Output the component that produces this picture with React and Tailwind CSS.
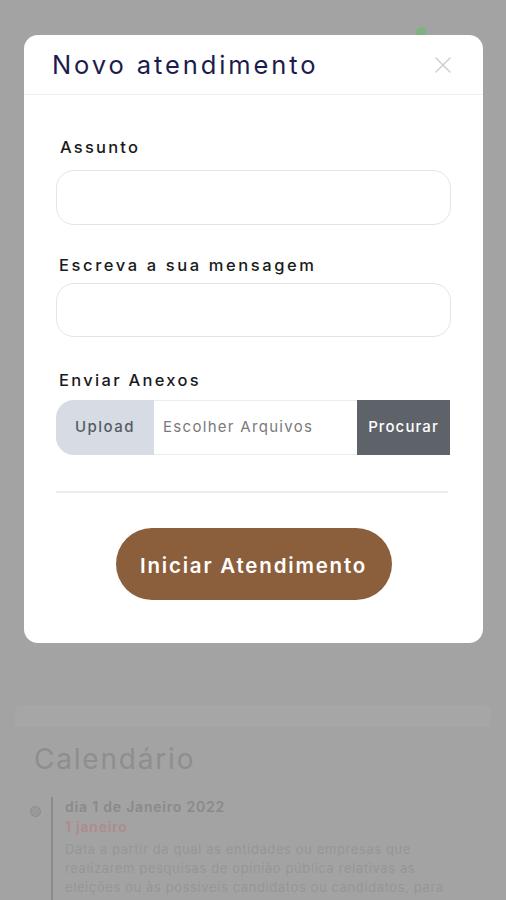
import React from 'react';

const font = { fontFamily: 'Inter, "Open Sans", sans-serif' };

const Background = () => (
  <div className="min-h-[900px] bg-[#a3a3a3] overflow-hidden">
    {/* faded status dot */}
    <div className="flex justify-end pr-[80px] pt-[27px]">
      <span className="block w-[10px] h-[10px] rounded-full bg-[#7fb27f]"></span>
    </div>

    {/* faded card edge */}
    <div className="mt-[668px] mx-[15px] h-[22px] bg-[#a6a6a6] rounded-t-md"></div>

    <div className="px-[34px] pt-[14px]">
      <h2 className="text-[28px] leading-[36px] text-[#8e8e8e] tracking-[1.8px]">Calendário</h2>

      <div className="mt-[20px] flex">
        <div className="w-[12px] pt-[9px] -ml-[4px]">
          <span className="block w-[11px] h-[11px] rounded-full border border-[#8c8c8c] bg-[#9a9a9a]"></span>
        </div>
        <div className="ml-[9px] w-[2px] bg-[#8a8a8a]"></div>
        <div className="pl-[12px] pb-[20px]">
          <p className="text-[14px] leading-[20px] font-semibold text-[#8a8a8a] tracking-[0.8px]">dia 1 de Janeiro 2022</p>
          <p className="text-[14px] leading-[20px] font-semibold text-[#b08a8e] tracking-[0.8px]">1 janeiro</p>
          <p className="mt-[3px] text-[13px] leading-[19px] text-[#969696] tracking-[0.6px] whitespace-nowrap">
            Data a partir da qual as entidades ou empresas que<br />
            realizarem pesquisas de opinião pública relativas as<br />
            eleições ou às possíveis candidatos ou candidatos, para
          </p>
        </div>
      </div>
    </div>
  </div>
);

const CloseIcon = () => (
  <svg width="18" height="18" viewBox="0 0 18 18" fill="none" stroke="#cfcfcf" strokeWidth="1.5" strokeLinecap="round">
    <path d="M2 2 L16 16 M16 2 L2 16" />
  </svg>
);

export default function App() {
  return (
    <div className="relative w-full" style={font}>
      <Background />

      {/* modal */}
      <div className="absolute left-[24px] top-[35px] w-[459px] bg-white rounded-[14px]">
        <div className="h-[60px] flex items-center justify-between pl-[28px] pr-[31px] border-b border-[#efefef]">
          <h1 className="text-[25.5px] leading-[32px] text-[#1c1c4c] tracking-[2.9px]">Novo atendimento</h1>
          <CloseIcon />
        </div>

        <div className="px-[32px] pt-[40px] pb-[43px]">
          <label className="block pl-[4px] text-[16.5px] leading-[24px] font-medium text-[#1a1a1a] tracking-[2.2px]">Assunto</label>
          <input className="mt-[11px] block w-full h-[55px] rounded-[18px] border border-[#e4e4e4] px-4 outline-none" />

          <label className="mt-[28px] block pl-[3px] text-[16.5px] leading-[24px] font-medium text-[#1a1a1a] tracking-[2.6px]">Escreva a sua mensagem</label>
          <input className="mt-[6px] block w-full h-[54px] rounded-[18px] border border-[#e4e4e4] px-4 outline-none" />

          <label className="mt-[31px] block pl-[3px] text-[16.5px] leading-[24px] font-medium text-[#1a1a1a] tracking-[2.3px]">Enviar Anexos</label>
          <div className="mt-[8px] flex h-[55px] w-[394px]">
            <div className="w-[98px] flex items-center justify-center bg-[#d6dbe4] rounded-l-[18px] text-[15px] font-medium text-[#555b63] tracking-[1.5px]">Upload</div>
            <div className="flex-1 flex items-center pl-[9px] border-y border-[#ececec] text-[15px] text-[#7a7a7a] tracking-[1.3px]">Escolher Arquivos</div>
            <div className="w-[93px] flex items-center justify-center bg-[#5d6369] text-[15px] font-medium text-white tracking-[1.1px]">Procurar</div>
          </div>

          <div className="mt-[36px] h-[2px] w-[392px] bg-[#ebebeb]"></div>

          <div className="mt-[35px] flex justify-center">
            <button className="w-[276px] h-[72px] rounded-full bg-[#8b5e3c] text-white text-[20.5px] font-semibold tracking-[1.8px] pt-[4px]">
              Iniciar Atendimento
            </button>
          </div>
        </div>
      </div>
    </div>
  );
}
